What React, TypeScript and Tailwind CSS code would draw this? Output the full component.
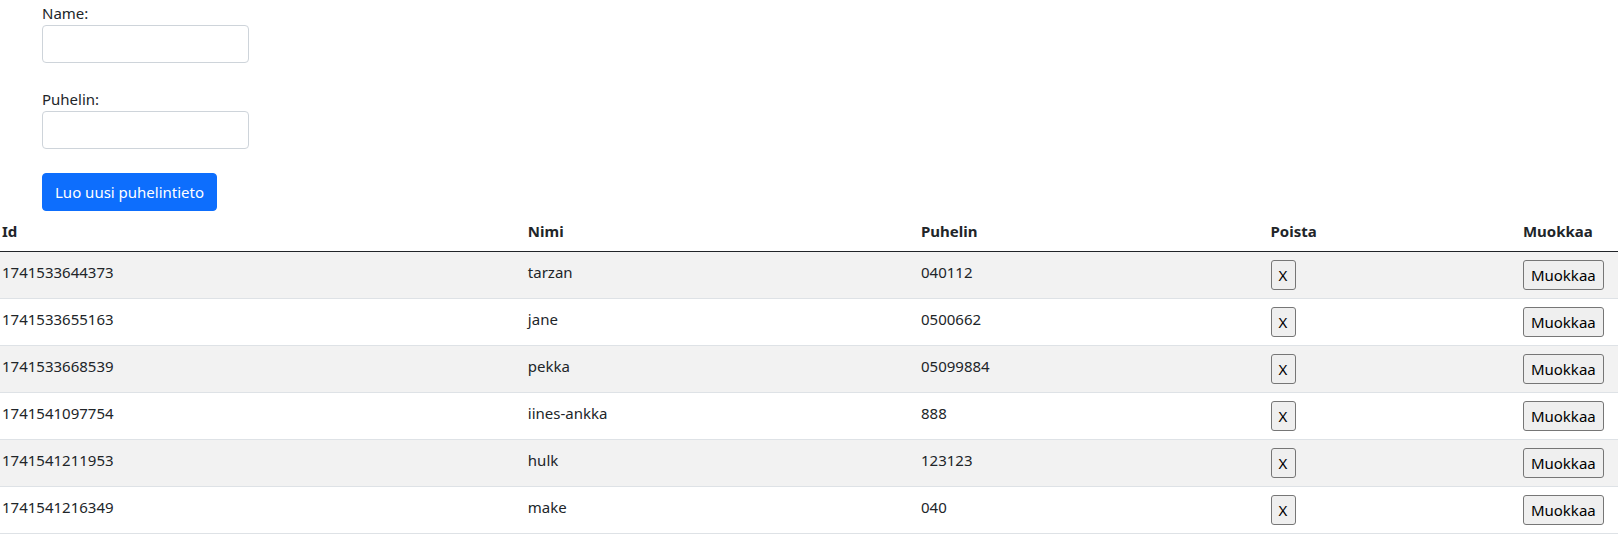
import { useState } from "react";
import type { FormEvent } from "react";

type Contact = { id: number; name: string; phone: string };

const initialContacts: Contact[] = [
  { id: 1741533644373, name: "tarzan", phone: "040112" },
  { id: 1741533655163, name: "jane", phone: "0500662" },
  { id: 1741533668539, name: "pekka", phone: "05099884" },
  { id: 1741541097754, name: "iines-ankka", phone: "888" },
  { id: 1741541211953, name: "hulk", phone: "123123" },
  { id: 1741541216349, name: "make", phone: "040" },
];

const inputClass =
  "block h-[38px] w-[207px] rounded border border-[#ced4da] bg-white px-3 outline-none focus:border-[#86b7fe]";
const rowButtonClass =
  "block min-w-[25px] rounded-[3px] border border-[#767676] bg-[#efefef] px-[7px] py-0.5 text-black hover:bg-[#e5e5e5]";
const headClass = "py-2 pl-0.5 text-left font-bold";
const cellClass = "py-2 pl-0.5 align-top";

export default function App() {
  const [contacts, setContacts] = useState(initialContacts);
  const [editingId, setEditingId] = useState<number | null>(null);
  const [name, setName] = useState("");
  const [phone, setPhone] = useState("");

  const save = (event: FormEvent) => {
    event.preventDefault();
    if (editingId !== null) {
      setContacts(contacts.map((c) => (c.id === editingId ? { ...c, name, phone } : c)));
    } else {
      setContacts([...contacts, { id: Date.now(), name, phone }]);
    }
    setEditingId(null);
    setName("");
    setPhone("");
  };

  const edit = (contact: Contact) => {
    setEditingId(contact.id);
    setName(contact.name);
    setPhone(contact.phone);
  };

  return (
    <main className="bg-white font-['Noto_Sans','Open_Sans',sans-serif] text-[15px] leading-6 text-[#212529]">
      <form onSubmit={save} className="flex flex-col items-start gap-6 pt-px pl-[42px]">
        <div>
          <label htmlFor="name" className="block">Name:</label>
          <input id="name" type="text" value={name} onChange={(e) => setName(e.target.value)} className={inputClass} />
        </div>
        <div>
          <label htmlFor="phone" className="block">Puhelin:</label>
          <input id="phone" type="text" value={phone} onChange={(e) => setPhone(e.target.value)} className={inputClass} />
        </div>
        <button type="submit" className="rounded border border-[#0d6efd] bg-[#0d6efd] px-3 py-1.5 text-white hover:bg-[#0b5ed7]">
          Luo uusi puhelintieto
        </button>
      </form>
      <table className="w-full table-fixed border-separate border-spacing-0">
        <thead>
          <tr className="*:border-b *:border-[#212529]">
            <th className={`${headClass} w-[32.5%]`}>Id</th>
            <th className={`${headClass} w-[24.3%]`}>Nimi</th>
            <th className={`${headClass} w-[21.6%]`}>Puhelin</th>
            <th className={`${headClass} w-[15.6%]`}>Poista</th>
            <th className={headClass}>Muokkaa</th>
          </tr>
        </thead>
        <tbody>
          {contacts.map((contact) => (
            <tr key={contact.id} className="odd:bg-[#f2f2f2] *:border-b *:border-[#dee2e6]">
              <td className={cellClass}>{contact.id}</td>
              <td className={cellClass}>{contact.name}</td>
              <td className={cellClass}>{contact.phone}</td>
              <td className={cellClass}>
                <button
                  type="button"
                  className={rowButtonClass}
                  onClick={() => setContacts(contacts.filter((c) => c.id !== contact.id))}
                >
                  X
                </button>
              </td>
              <td className={cellClass}>
                <button type="button" className={rowButtonClass} onClick={() => edit(contact)}>
                  Muokkaa
                </button>
              </td>
            </tr>
          ))}
        </tbody>
      </table>
    </main>
  );
}
